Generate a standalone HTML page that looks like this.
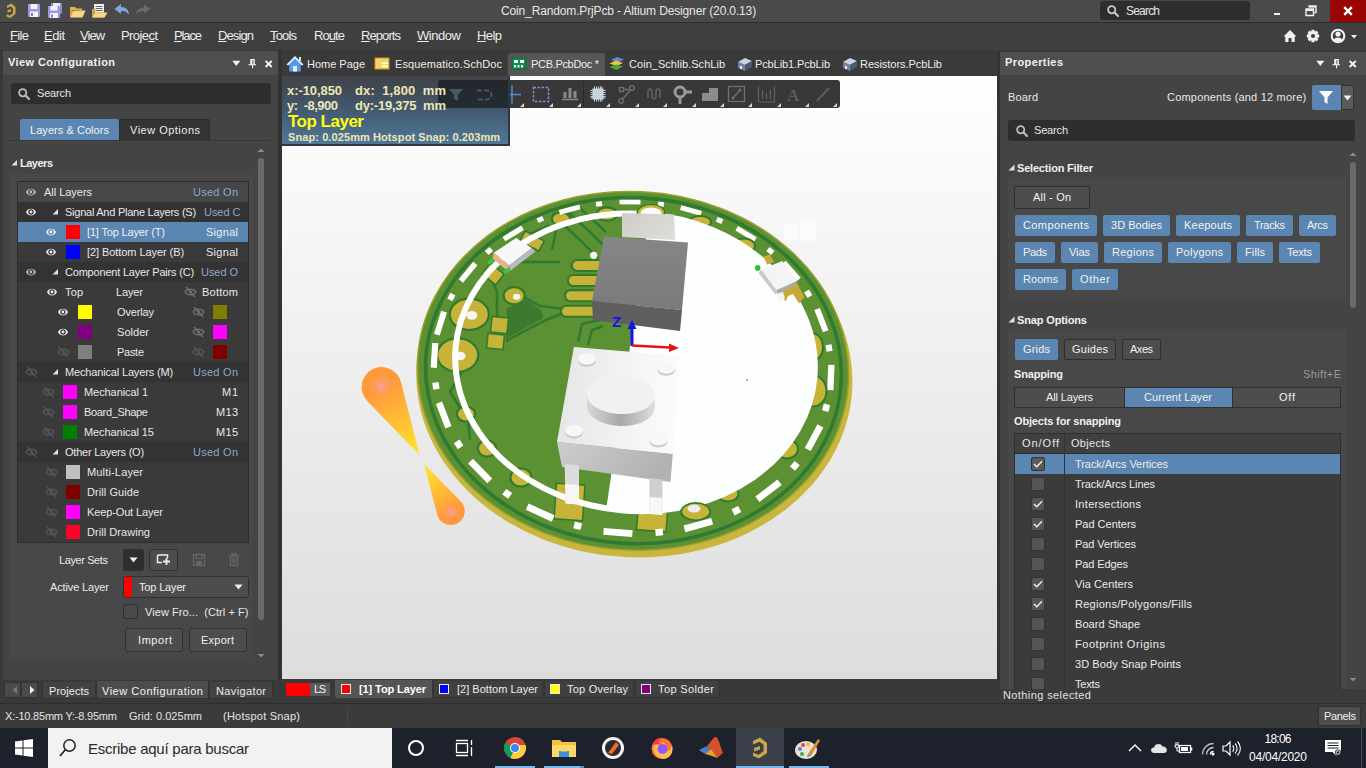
<!DOCTYPE html>
<html><head><meta charset="utf-8"><title>Altium Designer</title>
<style>
html,body{margin:0;padding:0;}
body{width:1366px;height:768px;overflow:hidden;position:relative;background:#3b3b3b;font-family:"Liberation Sans",sans-serif;}
u{text-decoration:underline;text-underline-offset:1px;}
</style></head><body>
<!-- p1_chrome -->
<div style="position:absolute;left:0px;top:0px;width:1366px;height:22px;background:#4a4a4a;"></div>
<div style="position:absolute;left:0px;top:22px;width:1366px;height:1px;background:#2e2e2e;"></div>
<div style="position:absolute;left:0px;top:23px;width:1366px;height:27px;background:#3f3f3f;"></div>
<svg style="position:absolute;left:0;top:0" width="160" height="22" viewBox="0 0 160 22">
<path d="M7 5.5 L11.5 3.5 L15.5 7 L15.5 14 L10 18 L6.5 16.5 L6.5 14.2 L9.8 15.6 L13 13.3 L13 8.2 L10.8 6.4 L7 8 Z" fill="#c9a646"/>
<path d="M7.5 10.2 L11 9 L11 11.5 L7.5 12.6 Z" fill="#c9a646"/>
<g>
<rect x="28" y="4" width="12" height="13" rx="1" fill="#9a9be0"/><rect x="30.5" y="4" width="7" height="5" fill="#f4f4ff"/><rect x="30" y="11.5" width="8" height="5.5" fill="#f4f4ff"/><rect x="31" y="13" width="2" height="3" fill="#7a7bc8"/>
</g>
<g>
<rect x="51" y="3" width="11" height="11" rx="1" fill="#8a8bd0"/><rect x="53" y="3" width="7" height="4" fill="#e8e8ff"/>
<rect x="48" y="6" width="12" height="12" rx="1" fill="#9a9be0"/><rect x="50.5" y="6" width="7" height="4.5" fill="#f4f4ff"/><rect x="50" y="13" width="8" height="5" fill="#f4f4ff"/><rect x="51" y="14.5" width="2" height="3" fill="#7a7bc8"/>
</g>
<g>
<path d="M70 7 L75 7 L76.5 8.5 L82 8.5 L82 10 L70 10 Z" fill="#e8b54a"/>
<path d="M70 17 L70 9.5 L73 9.5 L73 17 Z" fill="#d9a33a"/>
<path d="M70.5 17.5 L73.5 10.5 L85.5 10.5 L82.5 17.5 Z" fill="#f7d88a"/>
</g>
<g>
<rect x="94" y="4" width="10" height="9" fill="#f2f2f2"/><rect x="95.5" y="6" width="7" height="1" fill="#666"/><rect x="95.5" y="8" width="7" height="1" fill="#666"/><rect x="95.5" y="10" width="7" height="1" fill="#666"/>
<path d="M92 17.5 L92 9 L95 9 L95 12 L104 12 L104 17.5Z" fill="#d9a33a"/>
<path d="M92.5 17.5 L95.5 12.5 L107.5 12.5 L104.5 17.5 Z" fill="#f7d88a"/>
</g>
<path d="M114.5 9 L121 4 L121 7 C126 7 129 10 129 15 C127 11.5 124.5 11 121 11 L121 14 Z" fill="#7da7e0"/>
<path d="M150.500 9 L144 4.500 L144 7.500 C139.500 7.500 136.500 10 136 14.500 C138 11.500 140.500 11 144 11 L144 13.500 Z" fill="#6a6a6a"/>
</svg>
<div style="position:absolute;top:3.0px;height:16px;line-height:16px;font-size:12px;color:#e6e6e6;white-space:pre;letter-spacing:-0.14px;left:501.0px;">Coin_Random.PrjPcb - Altium Designer (20.0.13)</div>
<div style="position:absolute;left:1100px;top:1px;width:150px;height:19px;background:#2d2d2d;border-radius:3px;"></div>
<svg style="position:absolute;left:1106px;top:4px" width="14" height="14" viewBox="0 0 14 14"><circle cx="5.7" cy="5.7" r="3.6" fill="none" stroke="#c8c8c8" stroke-width="1.8"/><path d="M8.300 8.300 L12 12" stroke="#c8c8c8" stroke-width="2.2" stroke-linecap="round"/></svg>
<div style="position:absolute;top:2.5px;height:16px;line-height:16px;font-size:12px;color:#e6e6e6;white-space:pre;letter-spacing:-0.80px;left:1126.0px;">Search</div>
<div style="position:absolute;left:1274px;top:13px;width:6px;height:2px;background:#f0f0f0;"></div>
<svg style="position:absolute;left:1305px;top:5px" width="12" height="12" viewBox="0 0 12 12"><path d="M3.500 1 H11 V7.500 H9.500 M1 4 H8.500 V10.500 H1 Z" fill="none" stroke="#f0f0f0" stroke-width="1.4"/><rect x="1" y="4" width="7.5" height="2" fill="#f0f0f0"/><rect x="3.500" y="1" width="7.500" height="1.600" fill="#f0f0f0"/></svg>
<div style="position:absolute;left:1330px;top:0px;width:36px;height:22px;background:#990505;"></div>
<svg style="position:absolute;left:1342px;top:5px" width="12" height="12" viewBox="0 0 12 12"><path d="M2.200 2.200 L9.800 9.800 M9.800 2.200 L2.200 9.800" stroke="#fff" stroke-width="2.4"/></svg>
<div style="position:absolute;left:10px;top:27px;height:18px;line-height:18px;font-size:13px;color:#ececec;white-space:pre;letter-spacing:-0.65px"><u>F</u>ile</div>
<div style="position:absolute;left:44px;top:27px;height:18px;line-height:18px;font-size:13px;color:#ececec;white-space:pre;letter-spacing:-0.47px"><u>E</u>dit</div>
<div style="position:absolute;left:80px;top:27px;height:18px;line-height:18px;font-size:13px;color:#ececec;white-space:pre;letter-spacing:-0.98px"><u>V</u>iew</div>
<div style="position:absolute;left:121px;top:27px;height:18px;line-height:18px;font-size:13px;color:#ececec;white-space:pre;letter-spacing:-0.58px">Proje<u>c</u>t</div>
<div style="position:absolute;left:174px;top:27px;height:18px;line-height:18px;font-size:13px;color:#ececec;white-space:pre;letter-spacing:-1.13px"><u>P</u>lace</div>
<div style="position:absolute;left:218px;top:27px;height:18px;line-height:18px;font-size:13px;color:#ececec;white-space:pre;letter-spacing:-0.89px"><u>D</u>esign</div>
<div style="position:absolute;left:270px;top:27px;height:18px;line-height:18px;font-size:13px;color:#ececec;white-space:pre;letter-spacing:-0.84px"><u>T</u>ools</div>
<div style="position:absolute;left:314px;top:27px;height:18px;line-height:18px;font-size:13px;color:#ececec;white-space:pre;letter-spacing:-0.92px">Ro<u>u</u>te</div>
<div style="position:absolute;left:361px;top:27px;height:18px;line-height:18px;font-size:13px;color:#ececec;white-space:pre;letter-spacing:-0.92px"><u>R</u>eports</div>
<div style="position:absolute;left:417px;top:27px;height:18px;line-height:18px;font-size:13px;color:#ececec;white-space:pre;letter-spacing:-0.45px"><u>W</u>indow</div>
<div style="position:absolute;left:477px;top:27px;height:18px;line-height:18px;font-size:13px;color:#ececec;white-space:pre;letter-spacing:-0.58px"><u>H</u>elp</div>
<svg style="position:absolute;left:1280px;top:26px" width="86" height="20" viewBox="0 0 86 20">
<path d="M3.500 10.500 L10 4 L16.500 10.500 L14.700 10.500 L14.700 16 L11.500 16 L11.500 12 L8.500 12 L8.500 16 L5.300 16 L5.300 10.500 Z" fill="#f2f2f2"/>
<g transform="translate(33,10)" fill="#f2f2f2"><circle r="4.700"/><rect x="-1.600" y="-6.200" width="3.200" height="12.400"/><rect x="-1.600" y="-6.200" width="3.200" height="12.400" transform="rotate(45)"/><rect x="-1.600" y="-6.200" width="3.200" height="12.400" transform="rotate(90)"/><rect x="-1.600" y="-6.200" width="3.200" height="12.400" transform="rotate(135)"/><circle r="2.100" fill="#3f3f3f"/></g>
<circle cx="58" cy="10" r="6.300" fill="none" stroke="#f2f2f2" stroke-width="2"/><circle cx="58" cy="8" r="2.600" fill="#f2f2f2"/><path d="M53.800 14 C55 10.800 61 10.800 62.200 14 C60.500 16.200 55.500 16.200 53.800 14Z" fill="#f2f2f2"/>
<path d="M71 9 L77 9 L74 12.500 Z" fill="#f2f2f2"/>
</svg>
<!-- p2_left -->
<div style="position:absolute;left:0px;top:50px;width:282px;height:630px;background:#383838;"></div>
<div style="position:absolute;left:3px;top:51px;width:275px;height:24px;background:#4e4e4e;"></div>
<div style="position:absolute;left:3px;top:75px;width:275px;height:605px;background:#444444;"></div>
<div style="position:absolute;top:55.0px;height:15px;line-height:15px;font-size:11px;color:#f0f0f0;white-space:pre;letter-spacing:0.41px;font-weight:bold;left:8.0px;">View Configuration</div>
<svg style="position:absolute;left:230px;top:56px" width="46" height="14" viewBox="0 0 46 14"><path d="M2.300 4.800 L10.300 4.800 L6.300 10 Z" fill="#f4f4f4"/><path d="M20.200 3 H24.800 V8.200 H26 V9.300 H23.100 V12.200 H22 V9.300 H18.400 V8.200 H20.200 Z" fill="#f4f4f4"/><rect x="22.400" y="4" width="0.900" height="4.200" fill="#4e4e4e"/><path d="M35.600 4.900 L41.800 11 M41.800 4.900 L35.600 11" stroke="#f4f4f4" stroke-width="2"/></svg>
<div style="position:absolute;left:11px;top:83px;width:260px;height:21px;background:#2e2e2e;border-radius:3px;"></div>
<svg style="position:absolute;left:17px;top:87px" width="14" height="14" viewBox="0 0 14 14"><circle cx="5.700" cy="5.700" r="3.600" fill="none" stroke="#bdbdbd" stroke-width="1.800"/><path d="M8.300 8.300 L12 12" stroke="#bdbdbd" stroke-width="2.200" stroke-linecap="round"/></svg>
<div style="position:absolute;top:85.5px;height:15px;line-height:15px;font-size:11px;color:#e6e6e6;white-space:pre;letter-spacing:-0.17px;left:37.0px;">Search</div>
<div style="position:absolute;left:20px;top:119px;width:99px;height:21px;background:#5b86b2;border-radius:2px 2px 0 0;"></div>
<div style="position:absolute;left:119px;top:119px;width:91px;height:21px;background:#333333;border-radius:2px 2px 0 0;border:1px solid #2c2c2c;border-bottom:none;box-sizing:border-box;"></div>
<div style="position:absolute;left:8px;top:140px;width:263px;height:1px;background:#383838;"></div>
<div style="position:absolute;top:122.5px;height:15px;line-height:15px;font-size:11px;color:#f4f4f4;white-space:pre;letter-spacing:0.05px;left:30.0px;">Layers &amp; Colors</div>
<div style="position:absolute;top:122.5px;height:15px;line-height:15px;font-size:11px;color:#ececec;white-space:pre;letter-spacing:0.49px;left:130.0px;">View Options</div>
<svg style="position:absolute;left:11px;top:159px" width="7" height="7" viewBox="0 0 7 7"><path d="M6 1 L6 6.500 L0.500 6.500 Z" fill="#e0e0e0"/></svg>
<div style="position:absolute;top:155.5px;height:15px;line-height:15px;font-size:11px;color:#f0f0f0;white-space:pre;letter-spacing:-0.49px;font-weight:bold;left:20.0px;">Layers</div>
<div style="position:absolute;left:258px;top:158px;width:6px;height:462px;background:#6a6a6a;border-radius:3px;"></div>
<svg style="position:absolute;left:257px;top:147px" width="8" height="6"><path d="M0.500 5 L4 1.500 L7.500 5Z" fill="#8a8a8a"/></svg>
<svg style="position:absolute;left:257px;top:653px" width="8" height="6"><path d="M0.500 1 L4 4.500 L7.500 1Z" fill="#8a8a8a"/></svg>
<div style="position:absolute;left:10px;top:174px;width:243px;height:484px;background:#484848;"></div>
<div style="position:absolute;left:17px;top:181px;width:232px;height:362px;background:#373737;border:1px solid #2d2d2d;box-sizing:border-box;"></div>
<div style="position:absolute;left:18px;top:182px;width:230px;height:20px;background:#474747;"></div>
<svg style="position:absolute;left:25px;top:187px" width="12" height="10" viewBox="0 0 12 10"><path d="M1 5 C2.500 0.500 9.500 0.500 11 5 C9.500 9.500 2.500 9.500 1 5Z" fill="#bdbdbd"/><circle cx="6" cy="5" r="2.700" fill="#474747"/><circle cx="6" cy="5" r="1.400" fill="#bdbdbd"/></svg>
<div style="position:absolute;top:184.5px;height:15px;line-height:15px;font-size:11px;color:#e8e8e8;white-space:pre;letter-spacing:-0.03px;left:44.0px;">All Layers</div>
<div style="position:absolute;top:184.5px;height:15px;line-height:15px;font-size:11px;color:#8ba9cc;white-space:pre;letter-spacing:0.27px;left:193.0px;">Used On</div>
<div style="position:absolute;left:18px;top:202px;width:230px;height:20px;background:#333333;"></div>
<svg style="position:absolute;left:25px;top:207px" width="12" height="10" viewBox="0 0 12 10"><path d="M1 5 C2.500 0.500 9.500 0.500 11 5 C9.500 9.500 2.500 9.500 1 5Z" fill="#f0f0f0"/><circle cx="6" cy="5" r="2.700" fill="#333333"/><circle cx="6" cy="5" r="1.400" fill="#f0f0f0"/></svg>
<svg style="position:absolute;left:52px;top:208px" width="7" height="7" viewBox="0 0 7 7"><path d="M6 1 L6 6.500 L0.500 6.500 Z" fill="#e0e0e0"/></svg>
<div style="position:absolute;top:204.5px;height:15px;line-height:15px;font-size:11px;color:#e8e8e8;white-space:pre;letter-spacing:-0.25px;left:65.0px;">Signal And Plane Layers (S)</div>
<div style="position:absolute;left:204px;top:202px;width:35.5px;height:20px;overflow:hidden"><div style="position:absolute;top:2.5px;height:15px;line-height:15px;font-size:11px;color:#8ba9cc;white-space:pre;letter-spacing:-0.05px;left:0.0px;">Used C</div></div>
<div style="position:absolute;left:18px;top:222px;width:230px;height:20px;background:#5b86b2;"></div>
<svg style="position:absolute;left:45px;top:227px" width="12" height="10" viewBox="0 0 12 10"><path d="M1 5 C2.500 0.500 9.500 0.500 11 5 C9.500 9.500 2.500 9.500 1 5Z" fill="#f0f0f0"/><circle cx="6" cy="5" r="2.700" fill="#5b86b2"/><circle cx="6" cy="5" r="1.400" fill="#f0f0f0"/></svg>
<div style="position:absolute;left:66px;top:225.0px;width:14px;height:14px;background:#ff0000;"></div>
<div style="position:absolute;top:224.5px;height:15px;line-height:15px;font-size:11px;color:#f0f0f0;white-space:pre;letter-spacing:-0.16px;left:87.0px;">[1] Top Layer (T)</div>
<div style="position:absolute;top:224.5px;height:15px;line-height:15px;font-size:11px;color:#f0f0f0;white-space:pre;letter-spacing:0.28px;left:206.0px;">Signal</div>
<div style="position:absolute;left:18px;top:242px;width:230px;height:20px;background:#3a3a3a;"></div>
<svg style="position:absolute;left:45px;top:247px" width="12" height="10" viewBox="0 0 12 10"><path d="M1 5 C2.500 0.500 9.500 0.500 11 5 C9.500 9.500 2.500 9.500 1 5Z" fill="#f0f0f0"/><circle cx="6" cy="5" r="2.700" fill="#3a3a3a"/><circle cx="6" cy="5" r="1.400" fill="#f0f0f0"/></svg>
<div style="position:absolute;left:66px;top:245.0px;width:14px;height:14px;background:#0000ff;"></div>
<div style="position:absolute;top:244.5px;height:15px;line-height:15px;font-size:11px;color:#e8e8e8;white-space:pre;letter-spacing:-0.07px;left:87.0px;">[2] Bottom Layer (B)</div>
<div style="position:absolute;top:244.5px;height:15px;line-height:15px;font-size:11px;color:#e8e8e8;white-space:pre;letter-spacing:0.28px;left:206.0px;">Signal</div>
<div style="position:absolute;left:18px;top:262px;width:230px;height:20px;background:#333333;"></div>
<svg style="position:absolute;left:25px;top:267px" width="12" height="10" viewBox="0 0 12 10"><path d="M1 5 C2.500 0.500 9.500 0.500 11 5 C9.500 9.500 2.500 9.500 1 5Z" fill="#bdbdbd"/><circle cx="6" cy="5" r="2.700" fill="#333333"/><circle cx="6" cy="5" r="1.400" fill="#bdbdbd"/></svg>
<svg style="position:absolute;left:52px;top:268px" width="7" height="7" viewBox="0 0 7 7"><path d="M6 1 L6 6.500 L0.500 6.500 Z" fill="#e0e0e0"/></svg>
<div style="position:absolute;top:264.5px;height:15px;line-height:15px;font-size:11px;color:#e8e8e8;white-space:pre;letter-spacing:-0.20px;left:65.0px;">Component Layer Pairs (C)</div>
<div style="position:absolute;left:201px;top:262px;width:38.5px;height:20px;overflow:hidden"><div style="position:absolute;top:2.5px;height:15px;line-height:15px;font-size:11px;color:#8ba9cc;white-space:pre;letter-spacing:-0.05px;left:0.0px;">Used O</div></div>
<div style="position:absolute;left:18px;top:282px;width:230px;height:20px;background:#3a3a3a;"></div>
<svg style="position:absolute;left:46px;top:287px" width="12" height="10" viewBox="0 0 12 10"><path d="M1 5 C2.500 0.500 9.500 0.500 11 5 C9.500 9.500 2.500 9.500 1 5Z" fill="#f0f0f0"/><circle cx="6" cy="5" r="2.700" fill="#3a3a3a"/><circle cx="6" cy="5" r="1.400" fill="#f0f0f0"/></svg>
<div style="position:absolute;top:284.5px;height:15px;line-height:15px;font-size:11px;color:#e8e8e8;white-space:pre;letter-spacing:0.13px;left:65.0px;">Top</div>
<div style="position:absolute;top:284.5px;height:15px;line-height:15px;font-size:11px;color:#e8e8e8;white-space:pre;letter-spacing:-0.13px;left:116.0px;">Layer</div>
<svg style="position:absolute;left:183.5px;top:286px" width="13" height="12" viewBox="0 0 13 12"><path d="M1 6 C3 2.200 10 2.200 12 6 C10 9.800 3 9.800 1 6Z" fill="none" stroke="#707070" stroke-width="1.300"/><circle cx="6.500" cy="6" r="1.700" fill="#707070"/><path d="M2 1 L11 11" stroke="#707070" stroke-width="1.500"/></svg>
<div style="position:absolute;top:284.5px;height:15px;line-height:15px;font-size:11px;color:#e8e8e8;white-space:pre;letter-spacing:0.23px;left:202.0px;">Bottom</div>
<div style="position:absolute;left:18px;top:302px;width:230px;height:20px;background:#3a3a3a;"></div>
<svg style="position:absolute;left:57px;top:307px" width="12" height="10" viewBox="0 0 12 10"><path d="M1 5 C2.500 0.500 9.500 0.500 11 5 C9.500 9.500 2.500 9.500 1 5Z" fill="#f0f0f0"/><circle cx="6" cy="5" r="2.700" fill="#3a3a3a"/><circle cx="6" cy="5" r="1.400" fill="#f0f0f0"/></svg>
<div style="position:absolute;left:78px;top:305.0px;width:14px;height:14px;background:#ffff00;"></div>
<div style="position:absolute;top:304.5px;height:15px;line-height:15px;font-size:11px;color:#e8e8e8;white-space:pre;letter-spacing:-0.15px;left:117.0px;">Overlay</div>
<svg style="position:absolute;left:191.5px;top:306px" width="13" height="12" viewBox="0 0 13 12"><path d="M1 6 C3 2.200 10 2.200 12 6 C10 9.800 3 9.800 1 6Z" fill="none" stroke="#707070" stroke-width="1.300"/><circle cx="6.500" cy="6" r="1.700" fill="#707070"/><path d="M2 1 L11 11" stroke="#707070" stroke-width="1.500"/></svg>
<div style="position:absolute;left:213px;top:305.0px;width:14px;height:14px;background:#808000;"></div>
<div style="position:absolute;left:18px;top:322px;width:230px;height:20px;background:#3a3a3a;"></div>
<svg style="position:absolute;left:57px;top:327px" width="12" height="10" viewBox="0 0 12 10"><path d="M1 5 C2.500 0.500 9.500 0.500 11 5 C9.500 9.500 2.500 9.500 1 5Z" fill="#f0f0f0"/><circle cx="6" cy="5" r="2.700" fill="#3a3a3a"/><circle cx="6" cy="5" r="1.400" fill="#f0f0f0"/></svg>
<div style="position:absolute;left:78px;top:325.0px;width:14px;height:14px;background:#800080;"></div>
<div style="position:absolute;top:324.5px;height:15px;line-height:15px;font-size:11px;color:#e8e8e8;white-space:pre;letter-spacing:0.04px;left:117.0px;">Solder</div>
<svg style="position:absolute;left:191.5px;top:326px" width="13" height="12" viewBox="0 0 13 12"><path d="M1 6 C3 2.200 10 2.200 12 6 C10 9.800 3 9.800 1 6Z" fill="none" stroke="#707070" stroke-width="1.300"/><circle cx="6.500" cy="6" r="1.700" fill="#707070"/><path d="M2 1 L11 11" stroke="#707070" stroke-width="1.500"/></svg>
<div style="position:absolute;left:213px;top:325.0px;width:14px;height:14px;background:#ff00ff;"></div>
<div style="position:absolute;left:18px;top:342px;width:230px;height:20px;background:#3a3a3a;"></div>
<svg style="position:absolute;left:56.5px;top:346px" width="13" height="12" viewBox="0 0 13 12"><path d="M1 6 C3 2.200 10 2.200 12 6 C10 9.800 3 9.800 1 6Z" fill="none" stroke="#565656" stroke-width="1.300"/><circle cx="6.500" cy="6" r="1.700" fill="#565656"/><path d="M2 1 L11 11" stroke="#565656" stroke-width="1.500"/></svg>
<div style="position:absolute;left:78px;top:345.0px;width:14px;height:14px;background:#808080;"></div>
<div style="position:absolute;top:344.5px;height:15px;line-height:15px;font-size:11px;color:#e8e8e8;white-space:pre;letter-spacing:-0.28px;left:117.0px;">Paste</div>
<svg style="position:absolute;left:191.5px;top:346px" width="13" height="12" viewBox="0 0 13 12"><path d="M1 6 C3 2.200 10 2.200 12 6 C10 9.800 3 9.800 1 6Z" fill="none" stroke="#555" stroke-width="1.300"/><circle cx="6.500" cy="6" r="1.700" fill="#555"/><path d="M2 1 L11 11" stroke="#555" stroke-width="1.500"/></svg>
<div style="position:absolute;left:213px;top:345.0px;width:14px;height:14px;background:#800000;"></div>
<div style="position:absolute;left:18px;top:362px;width:230px;height:20px;background:#333333;"></div>
<svg style="position:absolute;left:24.5px;top:366px" width="13" height="12" viewBox="0 0 13 12"><path d="M1 6 C3 2.200 10 2.200 12 6 C10 9.800 3 9.800 1 6Z" fill="none" stroke="#565656" stroke-width="1.300"/><circle cx="6.500" cy="6" r="1.700" fill="#565656"/><path d="M2 1 L11 11" stroke="#565656" stroke-width="1.500"/></svg>
<svg style="position:absolute;left:52px;top:368px" width="7" height="7" viewBox="0 0 7 7"><path d="M6 1 L6 6.500 L0.500 6.500 Z" fill="#e0e0e0"/></svg>
<div style="position:absolute;top:364.5px;height:15px;line-height:15px;font-size:11px;color:#e8e8e8;white-space:pre;letter-spacing:-0.16px;left:65.0px;">Mechanical Layers (M)</div>
<div style="position:absolute;top:364.5px;height:15px;line-height:15px;font-size:11px;color:#8ba9cc;white-space:pre;letter-spacing:0.27px;left:193.0px;">Used On</div>
<div style="position:absolute;left:18px;top:382px;width:230px;height:20px;background:#3a3a3a;"></div>
<svg style="position:absolute;left:41.5px;top:386px" width="13" height="12" viewBox="0 0 13 12"><path d="M1 6 C3 2.200 10 2.200 12 6 C10 9.800 3 9.800 1 6Z" fill="none" stroke="#565656" stroke-width="1.300"/><circle cx="6.500" cy="6" r="1.700" fill="#565656"/><path d="M2 1 L11 11" stroke="#565656" stroke-width="1.500"/></svg>
<div style="position:absolute;left:63px;top:385.0px;width:14px;height:14px;background:#ff00ff;"></div>
<div style="position:absolute;top:384.5px;height:15px;line-height:15px;font-size:11px;color:#e8e8e8;white-space:pre;letter-spacing:-0.07px;left:84.0px;">Mechanical 1</div>
<div style="position:absolute;top:384.5px;height:15px;line-height:15px;font-size:11px;color:#e8e8e8;white-space:pre;letter-spacing:0.72px;left:222.0px;">M1</div>
<div style="position:absolute;left:18px;top:402px;width:230px;height:20px;background:#3a3a3a;"></div>
<svg style="position:absolute;left:41.5px;top:406px" width="13" height="12" viewBox="0 0 13 12"><path d="M1 6 C3 2.200 10 2.200 12 6 C10 9.800 3 9.800 1 6Z" fill="none" stroke="#565656" stroke-width="1.300"/><circle cx="6.500" cy="6" r="1.700" fill="#565656"/><path d="M2 1 L11 11" stroke="#565656" stroke-width="1.500"/></svg>
<div style="position:absolute;left:63px;top:405.0px;width:14px;height:14px;background:#ff00ff;"></div>
<div style="position:absolute;top:404.5px;height:15px;line-height:15px;font-size:11px;color:#e8e8e8;white-space:pre;letter-spacing:-0.33px;left:84.0px;">Board_Shape</div>
<div style="position:absolute;top:404.5px;height:15px;line-height:15px;font-size:11px;color:#e8e8e8;white-space:pre;letter-spacing:0.30px;left:216.0px;">M13</div>
<div style="position:absolute;left:18px;top:422px;width:230px;height:20px;background:#3a3a3a;"></div>
<svg style="position:absolute;left:41.5px;top:426px" width="13" height="12" viewBox="0 0 13 12"><path d="M1 6 C3 2.200 10 2.200 12 6 C10 9.800 3 9.800 1 6Z" fill="none" stroke="#565656" stroke-width="1.300"/><circle cx="6.500" cy="6" r="1.700" fill="#565656"/><path d="M2 1 L11 11" stroke="#565656" stroke-width="1.500"/></svg>
<div style="position:absolute;left:63px;top:425.0px;width:14px;height:14px;background:#008000;"></div>
<div style="position:absolute;top:424.5px;height:15px;line-height:15px;font-size:11px;color:#e8e8e8;white-space:pre;letter-spacing:-0.08px;left:84.0px;">Mechanical 15</div>
<div style="position:absolute;top:424.5px;height:15px;line-height:15px;font-size:11px;color:#e8e8e8;white-space:pre;letter-spacing:0.30px;left:216.0px;">M15</div>
<div style="position:absolute;left:18px;top:442px;width:230px;height:20px;background:#333333;"></div>
<svg style="position:absolute;left:24.5px;top:446px" width="13" height="12" viewBox="0 0 13 12"><path d="M1 6 C3 2.200 10 2.200 12 6 C10 9.800 3 9.800 1 6Z" fill="none" stroke="#565656" stroke-width="1.300"/><circle cx="6.500" cy="6" r="1.700" fill="#565656"/><path d="M2 1 L11 11" stroke="#565656" stroke-width="1.500"/></svg>
<svg style="position:absolute;left:52px;top:448px" width="7" height="7" viewBox="0 0 7 7"><path d="M6 1 L6 6.500 L0.500 6.500 Z" fill="#e0e0e0"/></svg>
<div style="position:absolute;top:444.5px;height:15px;line-height:15px;font-size:11px;color:#e8e8e8;white-space:pre;letter-spacing:-0.23px;left:65.0px;">Other Layers (O)</div>
<div style="position:absolute;top:444.5px;height:15px;line-height:15px;font-size:11px;color:#8ba9cc;white-space:pre;letter-spacing:0.27px;left:193.0px;">Used On</div>
<div style="position:absolute;left:18px;top:462px;width:230px;height:20px;background:#3a3a3a;"></div>
<svg style="position:absolute;left:44.5px;top:466px" width="13" height="12" viewBox="0 0 13 12"><path d="M1 6 C3 2.200 10 2.200 12 6 C10 9.800 3 9.800 1 6Z" fill="none" stroke="#565656" stroke-width="1.300"/><circle cx="6.500" cy="6" r="1.700" fill="#565656"/><path d="M2 1 L11 11" stroke="#565656" stroke-width="1.500"/></svg>
<div style="position:absolute;left:66px;top:465.0px;width:14px;height:14px;background:#c0c0c0;"></div>
<div style="position:absolute;top:464.5px;height:15px;line-height:15px;font-size:11px;color:#e8e8e8;white-space:pre;letter-spacing:0.16px;left:87.0px;">Multi-Layer</div>
<div style="position:absolute;left:18px;top:482px;width:230px;height:20px;background:#3a3a3a;"></div>
<svg style="position:absolute;left:44.5px;top:486px" width="13" height="12" viewBox="0 0 13 12"><path d="M1 6 C3 2.200 10 2.200 12 6 C10 9.800 3 9.800 1 6Z" fill="none" stroke="#565656" stroke-width="1.300"/><circle cx="6.500" cy="6" r="1.700" fill="#565656"/><path d="M2 1 L11 11" stroke="#565656" stroke-width="1.500"/></svg>
<div style="position:absolute;left:66px;top:485.0px;width:14px;height:14px;background:#800000;"></div>
<div style="position:absolute;top:484.5px;height:15px;line-height:15px;font-size:11px;color:#e8e8e8;white-space:pre;letter-spacing:0.07px;left:87.0px;">Drill Guide</div>
<div style="position:absolute;left:18px;top:502px;width:230px;height:20px;background:#3a3a3a;"></div>
<svg style="position:absolute;left:44.5px;top:506px" width="13" height="12" viewBox="0 0 13 12"><path d="M1 6 C3 2.200 10 2.200 12 6 C10 9.800 3 9.800 1 6Z" fill="none" stroke="#565656" stroke-width="1.300"/><circle cx="6.500" cy="6" r="1.700" fill="#565656"/><path d="M2 1 L11 11" stroke="#565656" stroke-width="1.500"/></svg>
<div style="position:absolute;left:66px;top:505.0px;width:14px;height:14px;background:#ff00ff;"></div>
<div style="position:absolute;top:504.5px;height:15px;line-height:15px;font-size:11px;color:#e8e8e8;white-space:pre;letter-spacing:-0.13px;left:87.0px;">Keep-Out Layer</div>
<div style="position:absolute;left:18px;top:522px;width:230px;height:20px;background:#3a3a3a;"></div>
<svg style="position:absolute;left:44.5px;top:526px" width="13" height="12" viewBox="0 0 13 12"><path d="M1 6 C3 2.200 10 2.200 12 6 C10 9.800 3 9.800 1 6Z" fill="none" stroke="#565656" stroke-width="1.300"/><circle cx="6.500" cy="6" r="1.700" fill="#565656"/><path d="M2 1 L11 11" stroke="#565656" stroke-width="1.500"/></svg>
<div style="position:absolute;left:66px;top:525.0px;width:14px;height:14px;background:#ff002a;"></div>
<div style="position:absolute;top:524.5px;height:15px;line-height:15px;font-size:11px;color:#e8e8e8;white-space:pre;letter-spacing:0.05px;left:87.0px;">Drill Drawing</div>
<div style="position:absolute;top:552.5px;height:15px;line-height:15px;font-size:11px;color:#e8e8e8;white-space:pre;letter-spacing:-0.40px;left:59.0px;">Layer Sets</div>
<div style="position:absolute;left:123px;top:549px;width:21px;height:22px;background:#2e2e2e;border-radius:3px;"></div>
<svg style="position:absolute;left:129px;top:557px" width="9" height="6"><path d="M0.500 0.500 L8.500 0.500 L4.500 5.500Z" fill="#f0f0f0"/></svg>
<div style="position:absolute;left:149px;top:549px;width:29px;height:22px;background:#4d4d4d;border:1px solid #303030;border-radius:3px;box-sizing:border-box;"></div>
<svg style="position:absolute;left:156px;top:553px" width="16" height="14" viewBox="0 0 16 14"><path d="M1.500 2 H11.500 V5 M6 9.500 H1.500 V2" fill="none" stroke="#f0f0f0" stroke-width="1.500"/><path d="M10.500 5 V12 M7 8.500 H14" stroke="#f0f0f0" stroke-width="1.800"/></svg>
<svg style="position:absolute;left:192px;top:553px" width="14" height="14" viewBox="0 0 14 14"><rect x="1.500" y="1.500" width="11" height="11" fill="none" stroke="#666" stroke-width="1.300"/><rect x="4" y="1.500" width="6" height="4" fill="none" stroke="#666" stroke-width="1.200"/><rect x="4" y="8" width="6" height="4.500" fill="#666"/></svg>
<svg style="position:absolute;left:227px;top:552px" width="14" height="15" viewBox="0 0 14 15"><path d="M2 4 H12 M5 4 V2 H9 V4 M3.500 4 V13.500 H10.500 V4 M6 6 V11.500 M8 6 V11.500" fill="none" stroke="#666" stroke-width="1.300"/></svg>
<div style="position:absolute;top:579.5px;height:15px;line-height:15px;font-size:11px;color:#e8e8e8;white-space:pre;letter-spacing:-0.14px;left:50.0px;">Active Layer</div>
<div style="position:absolute;left:123px;top:576px;width:126px;height:22px;background:#4d4d4d;border:1px solid #303030;border-radius:3px;box-sizing:border-box;"></div>
<div style="position:absolute;left:124px;top:577px;width:8px;height:20px;background:#ff0000;border-radius:2px 0 0 2px;"></div>
<div style="position:absolute;top:579.5px;height:15px;line-height:15px;font-size:11px;color:#f0f0f0;white-space:pre;letter-spacing:-0.16px;left:139.0px;">Top Layer</div>
<svg style="position:absolute;left:234px;top:584px" width="9" height="6"><path d="M0.500 0.500 L8.500 0.500 L4.500 5.500Z" fill="#f0f0f0"/></svg>
<div style="position:absolute;left:123px;top:604px;width:15px;height:15px;background:#4a4a4a;border:1px solid #2f2f2f;border-radius:3px;box-sizing:border-box;"></div>
<div style="position:absolute;top:604.5px;height:15px;line-height:15px;font-size:11px;color:#e8e8e8;white-space:pre;letter-spacing:0.06px;left:145.0px;">View Fro...  (Ctrl + F)</div>
<div style="position:absolute;left:125px;top:628px;width:58px;height:24px;background:#4d4d4d;border:1px solid #303030;border-radius:3px;box-sizing:border-box;"></div>
<div style="position:absolute;left:189px;top:628px;width:58px;height:24px;background:#4d4d4d;border:1px solid #303030;border-radius:3px;box-sizing:border-box;"></div>
<div style="position:absolute;top:632.5px;height:15px;line-height:15px;font-size:11px;color:#f0f0f0;white-space:pre;letter-spacing:0.57px;left:138.0px;">Import</div>
<div style="position:absolute;top:632.5px;height:15px;line-height:15px;font-size:11px;color:#f0f0f0;white-space:pre;letter-spacing:0.24px;left:201.0px;">Export</div>
<!-- p3_center -->
<div style="position:absolute;left:282px;top:50px;width:718px;height:26px;background:#3a3a3a;"></div>
<div style="position:absolute;left:278px;top:50px;width:4px;height:630px;background:#333;"></div>
<div style="position:absolute;left:997px;top:50px;width:3px;height:640px;background:#333;"></div>
<div style="position:absolute;left:508px;top:53px;width:97px;height:23px;background:#575757;border-radius:3px 3px 0 0;"></div>
<div style="position:absolute;top:56.5px;height:15px;line-height:15px;font-size:11px;color:#ececec;white-space:pre;letter-spacing:-0.01px;left:307.0px;">Home Page</div>
<div style="position:absolute;top:56.5px;height:15px;line-height:15px;font-size:11px;color:#ececec;white-space:pre;letter-spacing:0.11px;left:395.0px;">Esquematico.SchDoc</div>
<div style="position:absolute;top:56.5px;height:15px;line-height:15px;font-size:11px;color:#ececec;white-space:pre;letter-spacing:-0.32px;left:531.0px;">PCB.PcbDoc *</div>
<div style="position:absolute;top:56.5px;height:15px;line-height:15px;font-size:11px;color:#ececec;white-space:pre;letter-spacing:0.04px;left:629.0px;">Coin_Schlib.SchLib</div>
<div style="position:absolute;top:56.5px;height:15px;line-height:15px;font-size:11px;color:#ececec;white-space:pre;letter-spacing:-0.11px;left:755.0px;">PcbLib1.PcbLib</div>
<div style="position:absolute;top:56.5px;height:15px;line-height:15px;font-size:11px;color:#ececec;white-space:pre;letter-spacing:-0.04px;left:860.0px;">Resistors.PcbLib</div>
<svg style="position:absolute;left:286px;top:55px" width="680" height="18" viewBox="286 55 680 18">
<path d="M287 64.500 L295 56.500 L303 64.500 L300.800 64.500 L300.800 71.500 L289.200 71.500 L289.200 64.500Z" fill="#4f9bf0"/><path d="M286.500 64.500 L295 56 L303.500 64.500 L302 65.500 L295 58.500 L288 65.500Z" fill="#e8f0ff"/><rect x="293" y="66" width="4" height="5.500" fill="#e8f0ff"/><rect x="299" y="57" width="2" height="4" fill="#d8e4f8"/>
<rect x="375" y="58" width="14" height="11" fill="#f6d365" stroke="#c79a2a" stroke-width="1"/><rect x="382" y="62.500" width="6" height="1.600" fill="#fff"/><rect x="382" y="65.500" width="6" height="1.600" fill="#fff"/>
<rect x="512" y="58" width="14" height="11" fill="#128a4a" stroke="#0c6a38" stroke-width="1"/><rect x="514" y="60" width="4" height="3" fill="#e8fff0"/><rect x="520" y="60" width="4" height="3" fill="#e8fff0"/><rect x="514" y="65" width="2" height="2.500" fill="#e8fff0"/><rect x="517.500" y="65" width="2" height="2.500" fill="#e8fff0"/><rect x="521" y="65" width="2" height="2.500" fill="#e8fff0"/>
<path d="M611 60 L617 57 L624 59.500 L618 62.500Z" fill="#5a8ad8"/><path d="M609.500 63.500 L616 60.500 L623 63 L616.500 66Z" fill="#f0c23a"/><path d="M609.500 67 L616 64.500 L623 66.500 L616.500 70Z" fill="#4aa83a"/>
<path d="M738 62 L745 58 L752 61 L745 65Z" fill="#c8d4e4"/><path d="M738 62 L745 65 L745 71 L738 68Z" fill="#77859a"/><path d="M745 65 L752 61 L752 67 L745 71Z" fill="#4a5a72"/><rect x="740" y="66" width="2" height="3" fill="#e8eef8"/>
<path d="M843 62 L850 58 L857 61 L850 65Z" fill="#c8d4e4"/><path d="M843 62 L850 65 L850 71 L843 68Z" fill="#77859a"/><path d="M850 65 L857 61 L857 67 L850 71Z" fill="#4a5a72"/><rect x="845" y="66" width="2" height="3" fill="#e8eef8"/>
</svg>
<svg style="position:absolute;left:282px;top:76px" width="715" height="603" viewBox="282 76 715 603">
<defs>
<linearGradient id="bgg" x1="0" y1="0" x2="0" y2="1"><stop offset="0" stop-color="#ffffff"/><stop offset="0.25" stop-color="#f6f6f6"/><stop offset="1" stop-color="#dddddd"/></linearGradient>
<linearGradient id="cone1" gradientUnits="userSpaceOnUse" x1="419.500" y1="455" x2="381.600" y2="387"><stop offset="0" stop-color="#ffe92a"/><stop offset="0.45" stop-color="#ffc233"/><stop offset="1" stop-color="#ff9a3c"/></linearGradient>
<linearGradient id="cone2" gradientUnits="userSpaceOnUse" x1="424" y1="464" x2="450.700" y2="511"><stop offset="0" stop-color="#ffe92a"/><stop offset="0.5" stop-color="#ffc233"/><stop offset="1" stop-color="#ff9a3c"/></linearGradient>
<radialGradient id="pink"><stop offset="0" stop-color="#f9a0a8"/><stop offset="1" stop-color="#ff9a3c" stop-opacity="0"/></radialGradient>
<linearGradient id="gtop" x1="0" y1="0" x2="0" y2="1"><stop offset="0" stop-color="#868686"/><stop offset="1" stop-color="#7a7a7a"/></linearGradient>
<linearGradient id="tab" x1="0" y1="0" x2="1" y2="0.6"><stop offset="0" stop-color="#cfcdc8"/><stop offset="1" stop-color="#dcdbd8"/></linearGradient><linearGradient id="swt" x1="0" y1="0" x2="1" y2="0"><stop offset="0" stop-color="#e6e6e6"/><stop offset="0.7" stop-color="#f6f6f6"/><stop offset="1" stop-color="#fcfcfc"/></linearGradient>
<linearGradient id="swf" x1="0" y1="0" x2="1" y2="0.3"><stop offset="0" stop-color="#cdcdcd"/><stop offset="1" stop-color="#b2b2b2"/></linearGradient>
<linearGradient id="btn" x1="0" y1="0" x2="1" y2="0"><stop offset="0" stop-color="#d8d8d8"/><stop offset="0.5" stop-color="#a8a8a8"/><stop offset="1" stop-color="#dedede"/></linearGradient>
<clipPath id="inner"><ellipse cx="635" cy="362.300" rx="180" ry="148.600" transform="rotate(4.500 635 362.300)"/></clipPath>
<clipPath id="board"><ellipse cx="633" cy="370.800" rx="215.700" ry="179.300" transform="rotate(3 633 370.800)"/></clipPath>
</defs>
<rect x="282" y="76" width="715" height="603" fill="url(#bgg)"/>
<ellipse cx="634.3" cy="377.6" rx="218.2" ry="179.7" transform="rotate(3 634.3 377.6)" fill="#c9b63e"/>
<ellipse cx="633" cy="370.8" rx="215.7" ry="179.3" transform="rotate(3 633 370.8)" fill="#5b9133" stroke="#9a9e2c" stroke-width="1.5"/>
<ellipse cx="633.5" cy="370.6" rx="208" ry="173" transform="rotate(3 633.5 370.6)" fill="none" stroke="#2f7a30" stroke-width="3.6"/>
<g clip-path="url(#board)">
<path d="M507 308 L527 300 L542 311 L543 318 L506 339 Z" fill="#3d7a2e"/>
<path d="M492 280 L497 292 L497 330 M524 297 L540 306 L564 309 M506 341 L546 320 L564 313 M552 214 L578 238 L598 258 M566 210 L590 232 L604 246 M580 208 L606 232 M526 236 L548 226 L556 230 L552 250 M578 342 L582 324 L600 320 M588 345 L592 330 L603 326 M462 372 L450 392 L468 420 L470 440 M520 262 L560 262" fill="none" stroke="#2f7a30" stroke-width="2.5"/>
<ellipse cx="469.3" cy="314.3" rx="20.7" ry="16.8" fill="#2f7a30"/>
<ellipse cx="469.3" cy="314.3" rx="18.5" ry="14.6" fill="#c7b337"/>
<ellipse cx="471.8" cy="315.3" rx="5.5" ry="4.4" fill="#f6f6f6"/>
<ellipse cx="457.7" cy="355" rx="21.7" ry="17.8" fill="#2f7a30"/>
<ellipse cx="457.7" cy="355" rx="19.5" ry="15.6" fill="#c7b337"/>
<ellipse cx="460.2" cy="356" rx="5.3" ry="4.2" fill="#f6f6f6"/>
<ellipse cx="514.2" cy="295.7" rx="11.7" ry="9.7" fill="#2f7a30"/>
<ellipse cx="514.2" cy="295.7" rx="9.5" ry="7.5" fill="#c7b337"/>
<ellipse cx="516.7" cy="296.7" rx="3.8" ry="3.0" fill="#f6f6f6"/>
<ellipse cx="607" cy="214" rx="11.2" ry="7.7" fill="#2f7a30"/>
<ellipse cx="607" cy="214" rx="9" ry="5.5" fill="#c7b337"/>
<ellipse cx="561" cy="219" rx="10.2" ry="7.7" fill="#2f7a30"/>
<ellipse cx="561" cy="219" rx="8" ry="5.5" fill="#c7b337"/>
<ellipse cx="466" cy="414" rx="10.2" ry="8.7" fill="#2f7a30"/>
<ellipse cx="466" cy="414" rx="8" ry="6.5" fill="#c7b337"/>
<ellipse cx="487" cy="448.5" rx="10.2" ry="9.2" fill="#2f7a30"/>
<ellipse cx="487" cy="448.5" rx="8" ry="7" fill="#c7b337"/>
<ellipse cx="521" cy="477.5" rx="11.7" ry="10.2" fill="#2f7a30"/>
<ellipse cx="521" cy="477.5" rx="9.5" ry="8" fill="#c7b337"/>
<circle cx="593.700" cy="255.300" r="3.600" fill="#f8f8f8"/>
<rect x="570.8" y="258.9" width="40" height="13" rx="6.500" fill="#2f7a30"/>
<rect x="572.8" y="260.9" width="36" height="9" rx="4.500" fill="#c7b337"/>
<rect x="567" y="274.0" width="40" height="13" rx="6.500" fill="#2f7a30"/>
<rect x="569" y="276.0" width="36" height="9" rx="4.500" fill="#c7b337"/>
<rect x="564" y="289.2" width="40" height="13" rx="6.500" fill="#2f7a30"/>
<rect x="566" y="291.2" width="36" height="9" rx="4.500" fill="#c7b337"/>
<rect x="560" y="304.8" width="40" height="13" rx="6.500" fill="#2f7a30"/>
<rect x="562" y="306.8" width="36" height="9" rx="4.500" fill="#c7b337"/>
<rect x="490.5" y="316.5" width="18" height="17" fill="#2f7a30" transform="rotate(6 499.5 325.0)"/>
<rect x="492" y="318" width="15" height="14" fill="#c7b337" transform="rotate(6 499.5 325.0)"/>
<rect x="486.5" y="333.5" width="18" height="16" fill="#2f7a30" transform="rotate(6 495.5 341.5)"/>
<rect x="488" y="335" width="15" height="13" fill="#c7b337" transform="rotate(6 495.5 341.5)"/>
<rect x="483.5" y="266.5" width="19" height="15" fill="#2f7a30" transform="rotate(38 493.0 274.0)"/>
<rect x="485" y="268" width="16" height="12" fill="#c7b337" transform="rotate(38 493.0 274.0)"/>
<rect x="520.5" y="234.5" width="23" height="13" fill="#2f7a30" transform="rotate(28 532.0 241.0)"/>
<rect x="522" y="236" width="20" height="10" fill="#c7b337" transform="rotate(28 532.0 241.0)"/>
<rect x="554.5" y="483.5" width="30" height="37" fill="#2f7a30" transform="rotate(4 569.5 502.0)"/>
<rect x="556" y="485" width="27" height="34" fill="#c7b337" transform="rotate(4 569.5 502.0)"/>
<rect x="636.5" y="510.5" width="31" height="21" fill="#2f7a30" transform="rotate(4 652.0 521.0)"/>
<rect x="638" y="512" width="28" height="18" fill="#c7b337" transform="rotate(4 652.0 521.0)"/>
</g>
<path d="M619.5 202.0 L640.5 202.2" stroke="#ffffff" stroke-width="4.7" fill="none"/><path d="M658.0 203.9 L663.9 204.7" stroke="#ffffff" stroke-width="4.8" fill="none"/><path d="M680.7 207.7 L701.2 213.3" stroke="#ffffff" stroke-width="4.9" fill="none"/><path d="M716.7 219.2 L722.3 221.6" stroke="#ffffff" stroke-width="5.0" fill="none"/><path d="M736.7 228.2 L755.4 239.4" stroke="#ffffff" stroke-width="5.2" fill="none"/><path d="M768.0 249.0 L772.8 253.0" stroke="#ffffff" stroke-width="5.3" fill="none"/><path d="M783.7 262.5 L798.7 279.5" stroke="#ffffff" stroke-width="5.5" fill="none"/><path d="M806.5 291.0 L809.9 296.4" stroke="#ffffff" stroke-width="5.7" fill="none"/><path d="M817.1 309.0 L825.7 331.3" stroke="#ffffff" stroke-width="5.9" fill="none"/><path d="M828.5 344.7 L829.6 351.3" stroke="#ffffff" stroke-width="6.1" fill="none"/><path d="M831.4 364.9 L830.3 390.2" stroke="#ffffff" stroke-width="6.3" fill="none"/><path d="M827.0 404.4 L825.2 411.1" stroke="#ffffff" stroke-width="6.5" fill="none"/><path d="M820.4 425.9 L807.8 449.5" stroke="#ffffff" stroke-width="6.7" fill="none"/><path d="M797.2 463.1 L792.5 468.6" stroke="#ffffff" stroke-width="6.8" fill="none"/><path d="M779.6 482.2 L757.4 499.3" stroke="#ffffff" stroke-width="6.8" fill="none"/><path d="M739.7 509.0 L733.1 512.3" stroke="#ffffff" stroke-width="6.9" fill="none"/><path d="M712.2 521.3 L684.4 528.9" stroke="#ffffff" stroke-width="6.8" fill="none"/><path d="M662.9 531.9 L655.5 532.6" stroke="#ffffff" stroke-width="6.8" fill="none"/><path d="M632.4 533.7 L603.5 531.4" stroke="#ffffff" stroke-width="6.8" fill="none"/><path d="M581.3 526.8 L574.1 524.9" stroke="#ffffff" stroke-width="6.8" fill="none"/><path d="M553.2 518.5 L527.2 506.7" stroke="#ffffff" stroke-width="6.9" fill="none"/><path d="M510.2 495.9 L504.2 491.7" stroke="#ffffff" stroke-width="6.8" fill="none"/><path d="M489.8 480.8 L470.5 461.1" stroke="#ffffff" stroke-width="6.8" fill="none"/><path d="M460.6 447.3 L456.7 441.3" stroke="#ffffff" stroke-width="6.7" fill="none"/><path d="M448.4 427.3 L439.0 402.8" stroke="#ffffff" stroke-width="6.6" fill="none"/><path d="M436.4 389.3 L435.4 382.5" stroke="#ffffff" stroke-width="6.4" fill="none"/><path d="M433.7 367.8 L435.3 343.1" stroke="#ffffff" stroke-width="6.2" fill="none"/><path d="M436.9 334.6 L444.0 311.7" stroke="#ffffff" stroke-width="6.0" fill="none"/><path d="M449.9 299.9 L452.9 294.2" stroke="#ffffff" stroke-width="5.7" fill="none"/><path d="M460.9 281.0 L475.3 263.4" stroke="#ffffff" stroke-width="5.5" fill="none"/><path d="M486.6 253.0 L491.3 248.9" stroke="#ffffff" stroke-width="5.3" fill="none"/><path d="M503.9 239.1 L522.5 227.7" stroke="#ffffff" stroke-width="5.2" fill="none"/><path d="M537.5 220.7 L543.1 218.3" stroke="#ffffff" stroke-width="5.0" fill="none"/><path d="M559.4 212.3 L579.9 206.9" stroke="#ffffff" stroke-width="4.9" fill="none"/><path d="M596.0 204.3 L602.0 203.5" stroke="#ffffff" stroke-width="4.8" fill="none"/>
<g clip-path="url(#board)">
<ellipse cx="813" cy="347" rx="11" ry="14.5" fill="#2f7a30"/><ellipse cx="813" cy="347" rx="9" ry="12.5" fill="#c7b337"/>
<ellipse cx="813" cy="391" rx="14.5" ry="16.5" fill="#2f7a30"/><ellipse cx="813" cy="391" rx="12.5" ry="14.5" fill="#c7b337"/>
<ellipse cx="787" cy="449" rx="12" ry="10.5" fill="#2f7a30"/><ellipse cx="787" cy="449" rx="10" ry="8.5" fill="#c7b337"/>
<ellipse cx="728" cy="494" rx="11.5" ry="8.5" fill="#2f7a30"/><ellipse cx="728" cy="494" rx="9.5" ry="6.5" fill="#c7b337"/>
<ellipse cx="700" cy="222" rx="12" ry="7" fill="#2f7a30"/><ellipse cx="700" cy="222" rx="10" ry="5" fill="#c7b337"/>
<ellipse cx="744" cy="246" rx="12" ry="8.5" fill="#2f7a30"/><ellipse cx="744" cy="246" rx="10" ry="6.5" fill="#c7b337"/>
</g>
<ellipse cx="635" cy="362.3" rx="180" ry="148.6" transform="rotate(4.5 635 362.3)" fill="none" stroke="#ffffff" stroke-width="6"/>
<g clip-path="url(#inner)"><path d="M653 190 L631 340 L604.600 520 L700 560 L860 560 L860 190 Z" fill="#fdfefe"/></g>
<ellipse cx="695.700" cy="511.600" rx="15.500" ry="9.500" fill="#2f7a30"/><ellipse cx="695.700" cy="511.600" rx="13.500" ry="7.800" fill="#c7b337"/><ellipse cx="694" cy="508.500" rx="6.500" ry="4" fill="#ececf2"/>
<g clip-path="url(#inner)"><path d="M640 400 L640 503 L676 503 L700 498 L700 400 Z" fill="#fdfefe"/></g>
<path d="M493.700 252.700 L516.200 238 L531.800 247.900 L509.300 265.400 Z" fill="#f8f8f8"/><path d="M493.700 252.700 L509.300 265.400 L507.500 271 L492.500 258.500Z" fill="#e6b48c"/><path d="M509.300 265.400 L531.800 247.900 L535.500 251.500 L510 271Z" fill="#b9b9c2"/><path d="M487 262 L492 258 L494.500 261 L489.500 265Z M503 271 L508 267.500 L510 271 L505 274.500Z" fill="#3cc83c"/>
<path d="M781 290 L797 283 L804.500 297 L799 303.500 L793 294 L788 296 L786 301 L779 297Z" fill="#c9a83a"/><path d="M777 294 L783 292 L785 299 L779.500 301Z" fill="#f4f4f4"/><path d="M763.500 256.500 L770 254.500 L774 262 L767 264.500Z" fill="#c9a83a"/>
<path d="M761.100 269.600 L782.300 261.100 L796.700 281.400 L776.400 289.900 Z" fill="#f4f4f6"/><path d="M761.100 269.600 L776.400 289.900 L775.800 295 L758.800 273.300Z" fill="#c9c9c9"/><path d="M776.400 289.900 L796.700 281.400 L795.800 285.300 L776.800 294Z" fill="#a9a9a9"/><circle cx="757.700" cy="267.900" r="2.800" fill="#2fc02f"/>
<ellipse cx="651" cy="212.500" rx="14.500" ry="8.500" fill="#2f7a30"/><ellipse cx="651" cy="212.500" rx="13" ry="7.500" fill="#c7b337"/><ellipse cx="651" cy="213" rx="10.500" ry="5.500" fill="#fbfbfb"/>
<path d="M622 213 L674 214.500 L675 240 L622 237 Z" fill="url(#tab)"/>
<path d="M604 236.500 L688 242.500 L682 310 L592 301 Z" fill="url(#gtop)"/>
<path d="M592 301 L682 310 L680 331 L593 320 Z" fill="#5f5f5f"/>
<path d="M632 346 L632 327" stroke="#1414e6" stroke-width="3"/><path d="M627.500 329 L632 320 L636.500 329Z" fill="#1414e6"/>
<path d="M632 345.500 L670 347.500" stroke="#e61414" stroke-width="2.500"/><path d="M669 343.500 L679 348 L669 352Z" fill="#e61414"/>
<text x="612" y="327" font-family="Liberation Sans, sans-serif" font-weight="bold" font-size="15" fill="#1414e6">Z</text>
<path d="M557 442 L672.800 453.700 L670.500 482 L562 467 Z" fill="url(#swf)"/>
<path d="M573.900 347 L680.600 356 L672.800 453.700 L557 442 Z" fill="url(#swt)"/>
<path d="M564.700 464 L579 465.500 L579 504.500 L565.500 503.500Z" fill="#dcdcdc"/><path d="M565.300 484 L579 485 L579 504.500 L565.500 503.500Z" fill="#f7f7f7"/>
<path d="M649.400 478 L662.400 479.500 L662.400 515 L649.400 514Z" fill="#cfcfcf"/><path d="M649.400 497 L662.400 498 L662.400 515 L649.400 514Z" fill="#f7f7f7"/>
<path d="M586.700 394 A34 19 2 0 0 654.700 396 L654.700 408 A34 19 2 0 1 586.700 406 Z" fill="url(#btn)"/>
<ellipse cx="620.700" cy="394.500" rx="34" ry="19" transform="rotate(2 620.700 394.500)" fill="#f1f1f1"/>
<ellipse cx="586.9" cy="361" rx="9" ry="5.800" fill="#c8c8c8"/><ellipse cx="586.9" cy="359" rx="9" ry="5.800" fill="#f7f7f7"/>
<ellipse cx="666.3" cy="370" rx="9" ry="5.800" fill="#c8c8c8"/><ellipse cx="666.3" cy="368" rx="9" ry="5.800" fill="#f7f7f7"/>
<ellipse cx="573.9" cy="432.6" rx="9" ry="5.800" fill="#c8c8c8"/><ellipse cx="573.9" cy="430.6" rx="9" ry="5.800" fill="#f7f7f7"/>
<ellipse cx="658.5" cy="441.7" rx="9" ry="5.800" fill="#c8c8c8"/><ellipse cx="658.5" cy="439.7" rx="9" ry="5.800" fill="#f7f7f7"/>
<path d="M419.5 455 L367.2 400.9 A20 20 0 1 1 401.0 382.1 Z" fill="url(#cone1)"/><circle cx="381.600" cy="386" r="14" fill="url(#pink)"/>
<path d="M424 464 L460.7 501.2 A14 14 0 1 1 437.2 514.5 Z" fill="url(#cone2)"/><circle cx="451" cy="512" r="10" fill="url(#pink)"/>
<rect x="784" y="223" width="14" height="17" fill="#ffffff" opacity="0.600"/><rect x="800" y="221" width="16" height="20" fill="#ffffff" opacity="0.600"/>
<circle cx="747" cy="380" r="0.800" fill="#555"/>
</svg>
<div style="position:absolute;left:438px;top:80px;width:402px;height:28px;background:#383838;border-radius:3px;"></div>
<svg style="position:absolute;left:438px;top:80px" width="402" height="28" viewBox="438 80 402 28">
<g fill="#d8d8d8"><path d="M520 107 L524 107 L524 103Z"/><path d="M549 107 L553 107 L553 103Z"/><path d="M577 107 L581 107 L581 103Z"/><path d="M606 107 L610 107 L610 103Z"/><path d="M635 107 L639 107 L639 103Z"/><path d="M663 107 L667 107 L667 103Z"/><path d="M692 107 L696 107 L696 103Z"/><path d="M720 107 L724 107 L724 103Z"/><path d="M748 107 L752 107 L752 103Z"/><path d="M777 107 L781 107 L781 103Z"/><path d="M805 107 L809 107 L809 103Z"/><path d="M833 107 L837 107 L837 103Z"/></g>
<path d="M503 94.500 H521 M512 85.500 V103.500" stroke="#4a90d8" stroke-width="1.500"/>
<rect x="533.500" y="87.500" width="15" height="14" fill="none" stroke="#8a8ad8" stroke-width="1.500" stroke-dasharray="2.500 1.500"/>
<path d="M562 99.500 H578" stroke="#8a8a8a" stroke-width="1.500"/><rect x="563.500" y="92" width="3" height="6" fill="#8a8a8a"/><rect x="568.500" y="88" width="3" height="10" fill="#8a8a8a"/><rect x="573.500" y="91" width="3" height="7" fill="#8a8a8a"/>
<rect x="583" y="82" width="1" height="24" fill="#2a2a2a"/>
<rect x="592.500" y="88.500" width="11" height="11" fill="#c4d4dc"/><path d="M590.500 90.500 H605.500 M590.500 92.500 H605.500 M590.500 94.500 H605.500 M590.500 96.500 H605.500 M590.500 98 H605.500 M594.500 86.500 V101.500 M596.500 86.500 V101.500 M598.500 86.500 V101.500 M600.500 86.500 V101.500 M602 86.500 V101.500" stroke="#c4d4dc" stroke-width="1"/>
<g stroke="#707070" fill="none" stroke-width="1.300"><rect x="619.500" y="87.500" width="4" height="4"/><circle cx="632" cy="88" r="2.300"/><circle cx="621" cy="101" r="2.300"/><path d="M623.500 89.500 H629.500 M622.500 99 L630.500 90"/></g>
<path d="M648 98 V92 C648 88 652 88 652 92 V96 C652 100 656 100 656 96 V92 C656 88 660 88 660 92 V98" fill="none" stroke="#606060" stroke-width="1.600"/>
<circle cx="680" cy="92" r="5" fill="none" stroke="#9a9a9a" stroke-width="3"/><rect x="678.500" y="96" width="3" height="8" fill="#9a9a9a"/><rect x="684" y="90.500" width="8" height="3" fill="#9a9a9a"/>
<path d="M702 101 V93 H709 V88 H718 V101Z" fill="#8c8c8c"/>
<rect x="728.500" y="86.500" width="16" height="15" fill="none" stroke="#707070" stroke-width="1.300"/><path d="M733 98 L740 90" stroke="#707070" stroke-width="1.300"/><circle cx="733" cy="98" r="1.500" fill="#707070"/><circle cx="740" cy="90" r="1.500" fill="#707070"/>
<g stroke="#606060" stroke-width="1.200" fill="none"><path d="M758.500 86 V102 H774.500 V86 M762.500 90 V99 M766.500 93 V99 M770.500 90 V99"/></g>
<text x="787" y="101" font-family="Liberation Serif, serif" font-weight="bold" font-size="17" fill="#5c5c5c">A</text>
<path d="M817 101 L829 88" stroke="#5c5c5c" stroke-width="2"/>
</svg>
<div style="position:absolute;left:282px;top:76px;width:228px;height:70px;background:linear-gradient(180deg,#41464b 0%,#40474e 12%,#435970 50%,#4f7898 100%);border-right:2px solid #2b3742;border-bottom:2px solid #2b3742;box-sizing:border-box;"></div>
<div style="position:absolute;left:438px;top:80px;width:70px;height:28px;background:rgba(24,28,32,0.72);border-radius:3px 0 0 3px;"></div>
<svg style="position:absolute;left:438px;top:80px" width="71" height="28" viewBox="438 80 71 28"><path d="M449 89 H463 L458 95 V101 L454 99 V95Z" fill="#4a5660"/><path d="M477 90.500 H487 C493 90.500 493 99.500 487 99.500 H477" fill="none" stroke="#4a5660" stroke-width="2" stroke-dasharray="5 2"/></svg>
<div style="position:absolute;top:81.5px;height:17px;line-height:17px;font-size:13px;color:#efe6b4;white-space:pre;letter-spacing:-0.08px;font-weight:bold;left:287.0px;">x:-10,850</div>
<div style="position:absolute;top:81.5px;height:17px;line-height:17px;font-size:13px;color:#efe6b4;white-space:pre;letter-spacing:0.11px;font-weight:bold;left:355.0px;">dx:  1,800  mm</div>
<div style="position:absolute;top:96.5px;height:17px;line-height:17px;font-size:13px;color:#efe6b4;white-space:pre;letter-spacing:-0.52px;font-weight:bold;left:287.0px;">y:  -8,900</div>
<div style="position:absolute;top:96.5px;height:17px;line-height:17px;font-size:13px;color:#efe6b4;white-space:pre;letter-spacing:-0.23px;font-weight:bold;left:355.0px;">dy:-19,375  mm</div>
<div style="position:absolute;top:110.5px;height:21px;line-height:21px;font-size:17px;color:#ffff10;white-space:pre;letter-spacing:-0.50px;font-weight:bold;left:288.0px;">Top Layer</div>
<div style="position:absolute;top:130.0px;height:15px;line-height:15px;font-size:11px;color:#efe6b4;white-space:pre;letter-spacing:0.09px;font-weight:bold;left:288.0px;">Snap: 0.025mm Hotspot Snap: 0.203mm</div>
<!-- p4_right -->
<div style="position:absolute;left:1000px;top:50px;width:366px;height:640px;background:#444444;"></div>
<div style="position:absolute;left:1000px;top:52px;width:366px;height:23px;background:#4e4e4e;"></div>
<div style="position:absolute;left:1000px;top:50px;width:366px;height:2px;background:#383838;"></div>
<div style="position:absolute;top:55.0px;height:15px;line-height:15px;font-size:11px;color:#f0f0f0;white-space:pre;letter-spacing:0.40px;font-weight:bold;left:1005.0px;">Properties</div>
<svg style="position:absolute;left:1314px;top:56px" width="46" height="14" viewBox="0 0 46 14"><path d="M2.300 4.800 L10.300 4.800 L6.300 10 Z" fill="#f4f4f4"/><path d="M20.200 3 H24.800 V8.200 H26 V9.300 H23.100 V12.200 H22 V9.300 H18.400 V8.200 H20.200 Z" fill="#f4f4f4"/><rect x="22.400" y="4" width="0.900" height="4.200" fill="#4e4e4e"/><path d="M35.600 4.900 L41.800 11 M41.800 4.900 L35.600 11" stroke="#f4f4f4" stroke-width="2"/></svg>
<div style="position:absolute;top:89.5px;height:15px;line-height:15px;font-size:11px;color:#e8e8e8;white-space:pre;letter-spacing:0.16px;left:1008.0px;">Board</div>
<div style="position:absolute;top:89.5px;height:15px;line-height:15px;font-size:11px;color:#e8e8e8;white-space:pre;letter-spacing:0.20px;left:1167.0px;">Components (and 12 more)</div>
<div style="position:absolute;left:1312px;top:85px;width:29px;height:25px;background:#5b86b2;border-radius:2px 0 0 2px;"></div>
<svg style="position:absolute;left:1318px;top:90px" width="16" height="15" viewBox="0 0 16 15"><path d="M1 1 H15 L9.500 7.500 V14 L6.500 12 V7.500Z" fill="#ffffff"/></svg>
<div style="position:absolute;left:1341px;top:85px;width:13px;height:25px;background:#5a5a5a;border-radius:0 2px 2px 0;border:1px solid #333;box-sizing:border-box;"></div>
<svg style="position:absolute;left:1343px;top:95px" width="9" height="6"><path d="M0.500 0.500 L8.500 0.500 L4.500 5.500Z" fill="#f0f0f0"/></svg>
<div style="position:absolute;left:1008px;top:120px;width:347px;height:21px;background:#2e2e2e;border-radius:3px;"></div>
<svg style="position:absolute;left:1015px;top:124px" width="14" height="14" viewBox="0 0 14 14"><circle cx="5.700" cy="5.700" r="3.600" fill="none" stroke="#bdbdbd" stroke-width="1.800"/><path d="M8.300 8.300 L12 12" stroke="#bdbdbd" stroke-width="2.200" stroke-linecap="round"/></svg>
<div style="position:absolute;top:122.5px;height:15px;line-height:15px;font-size:11px;color:#e6e6e6;white-space:pre;letter-spacing:-0.17px;left:1034.0px;">Search</div>
<div style="position:absolute;left:1350px;top:162px;width:6px;height:146px;background:#6a6a6a;border-radius:3px;"></div>
<svg style="position:absolute;left:1349px;top:151px" width="8" height="6"><path d="M0.500 5 L4 1.500 L7.500 5Z" fill="#8a8a8a"/></svg>
<svg style="position:absolute;left:1349px;top:677px" width="8" height="6"><path d="M0.500 1 L4 4.500 L7.500 1Z" fill="#8a8a8a"/></svg>
<svg style="position:absolute;left:1008px;top:164px" width="7" height="7" viewBox="0 0 7 7"><path d="M6.500 0.500 L6.500 6.500 L0.500 6.500 Z" fill="#e0e0e0"/></svg>
<div style="position:absolute;top:160.5px;height:15px;line-height:15px;font-size:11px;color:#f0f0f0;white-space:pre;letter-spacing:-0.19px;font-weight:bold;left:1017.0px;">Selection Filter</div>
<div style="position:absolute;left:1008px;top:178px;width:338px;height:121px;background:#484848;"></div>
<div style="position:absolute;left:1014px;top:186px;width:76px;height:23px;background:#4d4d4d;border-radius:2px;border:1px solid #2f2f2f;box-sizing:border-box;"></div><div style="position:absolute;top:189.5px;height:15px;line-height:15px;font-size:11px;color:#f2f2f2;white-space:pre;letter-spacing:0.19px;left:1033.0px;">All - On</div>
<div style="position:absolute;left:1015px;top:215px;width:82px;height:21px;background:#5b86b2;border-radius:2px;"></div><div style="position:absolute;top:217.5px;height:15px;line-height:15px;font-size:11px;color:#f2f2f2;white-space:pre;letter-spacing:0.40px;left:1023.0px;">Components</div>
<div style="position:absolute;left:1103px;top:215px;width:67px;height:21px;background:#5b86b2;border-radius:2px;"></div><div style="position:absolute;top:217.5px;height:15px;line-height:15px;font-size:11px;color:#f2f2f2;white-space:pre;letter-spacing:0.03px;left:1111.0px;">3D Bodies</div>
<div style="position:absolute;left:1176px;top:215px;width:64px;height:21px;background:#5b86b2;border-radius:2px;"></div><div style="position:absolute;top:217.5px;height:15px;line-height:15px;font-size:11px;color:#f2f2f2;white-space:pre;letter-spacing:0.22px;left:1184.0px;">Keepouts</div>
<div style="position:absolute;left:1246px;top:215px;width:47px;height:21px;background:#5b86b2;border-radius:2px;"></div><div style="position:absolute;top:217.5px;height:15px;line-height:15px;font-size:11px;color:#f2f2f2;white-space:pre;letter-spacing:-0.32px;left:1254.0px;">Tracks</div>
<div style="position:absolute;left:1299px;top:215px;width:37px;height:21px;background:#5b86b2;border-radius:2px;"></div><div style="position:absolute;top:217.5px;height:15px;line-height:15px;font-size:11px;color:#f2f2f2;white-space:pre;letter-spacing:-0.33px;left:1307.0px;">Arcs</div>
<div style="position:absolute;left:1015px;top:242px;width:40px;height:21px;background:#5b86b2;border-radius:2px;"></div><div style="position:absolute;top:244.5px;height:15px;line-height:15px;font-size:11px;color:#f2f2f2;white-space:pre;letter-spacing:-0.36px;left:1023.0px;">Pads</div>
<div style="position:absolute;left:1061px;top:242px;width:37px;height:21px;background:#5b86b2;border-radius:2px;"></div><div style="position:absolute;top:244.5px;height:15px;line-height:15px;font-size:11px;color:#f2f2f2;white-space:pre;letter-spacing:-0.07px;left:1069.0px;">Vias</div>
<div style="position:absolute;left:1104px;top:242px;width:58px;height:21px;background:#5b86b2;border-radius:2px;"></div><div style="position:absolute;top:244.5px;height:15px;line-height:15px;font-size:11px;color:#f2f2f2;white-space:pre;letter-spacing:0.27px;left:1112.0px;">Regions</div>
<div style="position:absolute;left:1168px;top:242px;width:63px;height:21px;background:#5b86b2;border-radius:2px;"></div><div style="position:absolute;top:244.5px;height:15px;line-height:15px;font-size:11px;color:#f2f2f2;white-space:pre;letter-spacing:0.25px;left:1176.0px;">Polygons</div>
<div style="position:absolute;left:1237px;top:242px;width:36px;height:21px;background:#5b86b2;border-radius:2px;"></div><div style="position:absolute;top:244.5px;height:15px;line-height:15px;font-size:11px;color:#f2f2f2;white-space:pre;letter-spacing:0.11px;left:1245.0px;">Fills</div>
<div style="position:absolute;left:1279px;top:242px;width:41px;height:21px;background:#5b86b2;border-radius:2px;"></div><div style="position:absolute;top:244.5px;height:15px;line-height:15px;font-size:11px;color:#f2f2f2;white-space:pre;letter-spacing:-0.17px;left:1287.0px;">Texts</div>
<div style="position:absolute;left:1015px;top:269px;width:51px;height:21px;background:#5b86b2;border-radius:2px;"></div><div style="position:absolute;top:271.5px;height:15px;line-height:15px;font-size:11px;color:#f2f2f2;white-space:pre;letter-spacing:0.04px;left:1023.0px;">Rooms</div>
<div style="position:absolute;left:1072px;top:269px;width:46px;height:21px;background:#5b86b2;border-radius:2px;"></div><div style="position:absolute;top:271.5px;height:15px;line-height:15px;font-size:11px;color:#f2f2f2;white-space:pre;letter-spacing:0.62px;left:1080.0px;">Other</div>
<svg style="position:absolute;left:1008px;top:316px" width="7" height="7" viewBox="0 0 7 7"><path d="M6.500 0.500 L6.500 6.500 L0.500 6.500 Z" fill="#e0e0e0"/></svg>
<div style="position:absolute;top:312.5px;height:15px;line-height:15px;font-size:11px;color:#f0f0f0;white-space:pre;letter-spacing:-0.14px;font-weight:bold;left:1017.0px;">Snap Options</div>
<div style="position:absolute;left:1008px;top:330px;width:338px;height:360px;background:#484848;"></div>
<div style="position:absolute;left:1015px;top:339px;width:43px;height:21px;background:#5b86b2;border-radius:2px;"></div><div style="position:absolute;top:341.5px;height:15px;line-height:15px;font-size:11px;color:#f2f2f2;white-space:pre;letter-spacing:0.18px;left:1023.0px;">Grids</div>
<div style="position:absolute;left:1064px;top:339px;width:52px;height:21px;background:#4d4d4d;border-radius:2px;border:1px solid #2f2f2f;box-sizing:border-box;"></div><div style="position:absolute;top:341.5px;height:15px;line-height:15px;font-size:11px;color:#f2f2f2;white-space:pre;letter-spacing:0.23px;left:1072.0px;">Guides</div>
<div style="position:absolute;left:1122px;top:339px;width:39px;height:21px;background:#4d4d4d;border-radius:2px;border:1px solid #2f2f2f;box-sizing:border-box;"></div><div style="position:absolute;top:341.5px;height:15px;line-height:15px;font-size:11px;color:#f2f2f2;white-space:pre;letter-spacing:-0.48px;left:1130.0px;">Axes</div>
<div style="position:absolute;top:366.5px;height:15px;line-height:15px;font-size:11px;color:#f0f0f0;white-space:pre;letter-spacing:-0.16px;font-weight:bold;left:1014.0px;">Snapping</div>
<div style="position:absolute;top:366.5px;height:15px;line-height:15px;font-size:11px;color:#9a9a9a;white-space:pre;letter-spacing:0.37px;left:1303.0px;">Shift+E</div>
<div style="position:absolute;left:1014px;top:387px;width:327px;height:21px;background:#4d4d4d;border:1px solid #2f2f2f;box-sizing:border-box;"></div>
<div style="position:absolute;left:1124px;top:387px;width:109px;height:21px;background:#5b86b2;border:1px solid #2f2f2f;box-sizing:border-box;"></div>
<div style="position:absolute;top:390.0px;height:15px;line-height:15px;font-size:11px;color:#f0f0f0;white-space:pre;letter-spacing:-0.14px;left:1046.0px;">All Layers</div>
<div style="position:absolute;top:390.0px;height:15px;line-height:15px;font-size:11px;color:#f0f0f0;white-space:pre;letter-spacing:0.06px;left:1144.0px;">Current Layer</div>
<div style="position:absolute;top:390.0px;height:15px;line-height:15px;font-size:11px;color:#f0f0f0;white-space:pre;letter-spacing:0.77px;left:1279.0px;">Off</div>
<div style="position:absolute;top:413.5px;height:15px;line-height:15px;font-size:11px;color:#f0f0f0;white-space:pre;letter-spacing:-0.16px;font-weight:bold;left:1014.0px;">Objects for snapping</div>
<div style="position:absolute;left:1014px;top:433px;width:327px;height:257px;background:#3b3b3b;border:1px solid #2f2f2f;box-sizing:border-box;"></div>
<div style="position:absolute;left:1015px;top:434px;width:325px;height:19px;background:#404040;"></div>
<div style="position:absolute;left:1015px;top:453px;width:325px;height:1px;background:#2f2f2f;"></div>
<div style="position:absolute;top:436.0px;height:15px;line-height:15px;font-size:11px;color:#e8e8e8;white-space:pre;letter-spacing:0.96px;left:1022.0px;">On/Off</div>
<div style="position:absolute;top:436.0px;height:15px;line-height:15px;font-size:11px;color:#e8e8e8;white-space:pre;letter-spacing:0.29px;left:1071.0px;">Objects</div>
<div style="position:absolute;left:1015px;top:454px;width:325px;height:20px;background:#5b86b2;"></div>
<div style="position:absolute;left:1031px;top:457px;width:14px;height:14px;background:#5a5a5a;border:1px solid #333;border-radius:2px;box-sizing:border-box;"></div>
<svg style="position:absolute;left:1033px;top:460px" width="10" height="8" viewBox="0 0 10 8"><path d="M1 4 L3.800 6.800 L9 1.200" fill="none" stroke="#f0f0f0" stroke-width="1.400"/></svg>
<div style="position:absolute;top:456.5px;height:15px;line-height:15px;font-size:11px;color:#ececec;white-space:pre;letter-spacing:-0.07px;left:1075.0px;">Track/Arcs Vertices</div>
<div style="position:absolute;left:1031px;top:477px;width:14px;height:14px;background:#555555;border:1px solid #333;border-radius:2px;box-sizing:border-box;"></div>
<div style="position:absolute;top:476.5px;height:15px;line-height:15px;font-size:11px;color:#ececec;white-space:pre;letter-spacing:-0.10px;left:1075.0px;">Track/Arcs Lines</div>
<div style="position:absolute;left:1031px;top:497px;width:14px;height:14px;background:#555555;border:1px solid #333;border-radius:2px;box-sizing:border-box;"></div>
<svg style="position:absolute;left:1033px;top:500px" width="10" height="8" viewBox="0 0 10 8"><path d="M1 4 L3.800 6.800 L9 1.200" fill="none" stroke="#f0f0f0" stroke-width="1.400"/></svg>
<div style="position:absolute;top:496.5px;height:15px;line-height:15px;font-size:11px;color:#ececec;white-space:pre;letter-spacing:0.30px;left:1075.0px;">Intersections</div>
<div style="position:absolute;left:1031px;top:517px;width:14px;height:14px;background:#555555;border:1px solid #333;border-radius:2px;box-sizing:border-box;"></div>
<svg style="position:absolute;left:1033px;top:520px" width="10" height="8" viewBox="0 0 10 8"><path d="M1 4 L3.800 6.800 L9 1.200" fill="none" stroke="#f0f0f0" stroke-width="1.400"/></svg>
<div style="position:absolute;top:516.5px;height:15px;line-height:15px;font-size:11px;color:#ececec;white-space:pre;letter-spacing:-0.01px;left:1075.0px;">Pad Centers</div>
<div style="position:absolute;left:1031px;top:537px;width:14px;height:14px;background:#555555;border:1px solid #333;border-radius:2px;box-sizing:border-box;"></div>
<div style="position:absolute;top:536.5px;height:15px;line-height:15px;font-size:11px;color:#ececec;white-space:pre;letter-spacing:-0.07px;left:1075.0px;">Pad Vertices</div>
<div style="position:absolute;left:1031px;top:557px;width:14px;height:14px;background:#555555;border:1px solid #333;border-radius:2px;box-sizing:border-box;"></div>
<div style="position:absolute;top:556.5px;height:15px;line-height:15px;font-size:11px;color:#ececec;white-space:pre;letter-spacing:-0.10px;left:1075.0px;">Pad Edges</div>
<div style="position:absolute;left:1031px;top:577px;width:14px;height:14px;background:#555555;border:1px solid #333;border-radius:2px;box-sizing:border-box;"></div>
<svg style="position:absolute;left:1033px;top:580px" width="10" height="8" viewBox="0 0 10 8"><path d="M1 4 L3.800 6.800 L9 1.200" fill="none" stroke="#f0f0f0" stroke-width="1.400"/></svg>
<div style="position:absolute;top:576.5px;height:15px;line-height:15px;font-size:11px;color:#ececec;white-space:pre;letter-spacing:0.07px;left:1075.0px;">Via Centers</div>
<div style="position:absolute;left:1031px;top:597px;width:14px;height:14px;background:#555555;border:1px solid #333;border-radius:2px;box-sizing:border-box;"></div>
<svg style="position:absolute;left:1033px;top:600px" width="10" height="8" viewBox="0 0 10 8"><path d="M1 4 L3.800 6.800 L9 1.200" fill="none" stroke="#f0f0f0" stroke-width="1.400"/></svg>
<div style="position:absolute;top:596.5px;height:15px;line-height:15px;font-size:11px;color:#ececec;white-space:pre;letter-spacing:0.27px;left:1075.0px;">Regions/Polygons/Fills</div>
<div style="position:absolute;left:1031px;top:617px;width:14px;height:14px;background:#555555;border:1px solid #333;border-radius:2px;box-sizing:border-box;"></div>
<div style="position:absolute;top:616.5px;height:15px;line-height:15px;font-size:11px;color:#ececec;white-space:pre;letter-spacing:0.08px;left:1075.0px;">Board Shape</div>
<div style="position:absolute;left:1031px;top:637px;width:14px;height:14px;background:#555555;border:1px solid #333;border-radius:2px;box-sizing:border-box;"></div>
<div style="position:absolute;top:636.5px;height:15px;line-height:15px;font-size:11px;color:#ececec;white-space:pre;letter-spacing:0.54px;left:1075.0px;">Footprint Origins</div>
<div style="position:absolute;left:1031px;top:657px;width:14px;height:14px;background:#555555;border:1px solid #333;border-radius:2px;box-sizing:border-box;"></div>
<div style="position:absolute;top:656.5px;height:15px;line-height:15px;font-size:11px;color:#ececec;white-space:pre;letter-spacing:0.08px;left:1075.0px;">3D Body Snap Points</div>
<div style="position:absolute;left:1031px;top:677px;width:14px;height:13px;background:#555555;border:1px solid #333;border-radius:2px;box-sizing:border-box;"></div>
<div style="position:absolute;top:676.5px;height:15px;line-height:15px;font-size:11px;color:#ececec;white-space:pre;letter-spacing:-0.17px;left:1075.0px;">Texts</div>
<div style="position:absolute;left:1064px;top:434px;width:1px;height:256px;background:#333;"></div>
<div style="position:absolute;left:1000px;top:689px;width:366px;height:15px;background:#3b3b3b;"></div>
<div style="position:absolute;top:688.0px;height:15px;line-height:15px;font-size:11px;color:#e0e0e0;white-space:pre;letter-spacing:0.40px;left:1003.0px;">Nothing selected</div>
<!-- p5_bottom -->
<div style="position:absolute;left:0px;top:680px;width:1000px;height:24px;background:#393939;"></div>
<div style="position:absolute;left:4px;top:682px;width:17px;height:16px;background:#4a4a4a;border:1px solid #333;box-sizing:border-box;"></div>
<div style="position:absolute;left:21px;top:682px;width:17px;height:16px;background:#4a4a4a;border:1px solid #333;box-sizing:border-box;"></div>
<svg style="position:absolute;left:4px;top:682px" width="34" height="16"><path d="M13 4 L13 12 L8.500 8Z" fill="#777"/><path d="M26 4 L26 12 L30.500 8Z" fill="#f0f0f0"/></svg>
<div style="position:absolute;left:42px;top:682px;width:54px;height:17px;background:#424242;border:1px solid #333;border-top:none;box-sizing:border-box;"></div>
<div style="position:absolute;left:96px;top:681px;width:113px;height:18px;background:#4c4c4c;border:1px solid #333;border-top:none;box-sizing:border-box;"></div>
<div style="position:absolute;left:209px;top:682px;width:64px;height:17px;background:#424242;border:1px solid #333;border-top:none;box-sizing:border-box;"></div>
<div style="position:absolute;top:683.5px;height:15px;line-height:15px;font-size:11px;color:#ececec;white-space:pre;letter-spacing:0.04px;left:49.0px;">Projects</div>
<div style="position:absolute;top:683.5px;height:15px;line-height:15px;font-size:11px;color:#f2f2f2;white-space:pre;letter-spacing:0.52px;left:102.0px;">View Configuration</div>
<div style="position:absolute;top:683.5px;height:15px;line-height:15px;font-size:11px;color:#ececec;white-space:pre;letter-spacing:0.37px;left:216.0px;">Navigator</div>
<div style="position:absolute;left:286px;top:683px;width:24px;height:13px;background:#ff0000;"></div>
<div style="position:absolute;left:310px;top:683px;width:20px;height:13px;background:#5a5a5a;"></div>
<div style="position:absolute;top:682.0px;height:15px;line-height:15px;font-size:11px;color:#f2f2f2;white-space:pre;letter-spacing:-1.45px;left:314.0px;">LS</div>
<div style="position:absolute;left:433px;top:681px;width:110px;height:17px;background:#404040;border:1px solid #333;border-top:none;box-sizing:border-box;"></div>
<div style="position:absolute;left:544px;top:681px;width:90px;height:17px;background:#404040;border:1px solid #333;border-top:none;box-sizing:border-box;"></div>
<div style="position:absolute;left:635px;top:681px;width:85px;height:17px;background:#404040;border:1px solid #333;border-top:none;box-sizing:border-box;"></div>
<div style="position:absolute;left:335px;top:680px;width:97px;height:18px;background:#555555;border-radius:0 0 2px 2px;"></div>
<div style="position:absolute;left:341px;top:684px;width:10px;height:10px;background:#ff0000;border:1px solid #e8e8e8;box-sizing:border-box;"></div>
<div style="position:absolute;top:681.5px;height:15px;line-height:15px;font-size:11px;color:#ffffff;white-space:pre;letter-spacing:-0.10px;font-weight:bold;left:359.0px;">[1] Top Layer</div>
<div style="position:absolute;left:439px;top:684px;width:10px;height:10px;background:#0000ff;border:1px solid #e8e8e8;box-sizing:border-box;"></div>
<div style="position:absolute;top:681.5px;height:15px;line-height:15px;font-size:11px;color:#ececec;white-space:pre;letter-spacing:0.02px;left:457.0px;">[2] Bottom Layer</div>
<div style="position:absolute;left:550px;top:684px;width:10px;height:10px;background:#ffff00;border:1px solid #e8e8e8;box-sizing:border-box;"></div>
<div style="position:absolute;top:681.5px;height:15px;line-height:15px;font-size:11px;color:#ececec;white-space:pre;letter-spacing:0.23px;left:567.0px;">Top Overlay</div>
<div style="position:absolute;left:641px;top:684px;width:10px;height:10px;background:#800080;border:1px solid #e8e8e8;box-sizing:border-box;"></div>
<div style="position:absolute;top:681.5px;height:15px;line-height:15px;font-size:11px;color:#ececec;white-space:pre;letter-spacing:0.38px;left:658.0px;">Top Solder</div>
<div style="position:absolute;left:0px;top:704px;width:1366px;height:24px;background:#3b3b3b;"></div>
<div style="position:absolute;left:0px;top:703px;width:1366px;height:1px;background:#2e2e2e;"></div>
<div style="position:absolute;top:708.5px;height:15px;line-height:15px;font-size:11px;color:#e4e4e4;white-space:pre;letter-spacing:-0.21px;left:5.0px;">X:-10.85mm Y:-8.95mm</div>
<div style="position:absolute;top:708.5px;height:15px;line-height:15px;font-size:11px;color:#e4e4e4;white-space:pre;letter-spacing:0.02px;left:129.0px;">Grid: 0.025mm</div>
<div style="position:absolute;top:708.5px;height:15px;line-height:15px;font-size:11px;color:#e4e4e4;white-space:pre;letter-spacing:0.23px;left:223.0px;">(Hotspot Snap)</div>
<div style="position:absolute;left:347px;top:706px;width:1px;height:20px;background:#4a4a4a;"></div>
<div style="position:absolute;left:1318px;top:706px;width:43px;height:20px;background:#4d4d4d;border:1px solid #2f2f2f;border-radius:2px;box-sizing:border-box;"></div>
<div style="position:absolute;top:708.5px;height:15px;line-height:15px;font-size:11px;color:#f0f0f0;white-space:pre;letter-spacing:-0.33px;left:1324.0px;">Panels</div>
<div style="position:absolute;left:0px;top:728px;width:1366px;height:40px;background:#1d212c;"></div>
<svg style="position:absolute;left:15px;top:739px" width="18" height="18" viewBox="0 0 18 18"><path d="M0 2.500 L7.500 1.500 V8.500 H0Z M8.500 1.300 L18 0 V8.500 H8.500Z M0 9.500 H7.500 V16.500 L0 15.500Z M8.500 9.500 H18 V18 L8.500 16.700Z" fill="#ffffff"/></svg>
<div style="position:absolute;left:48px;top:728px;width:344px;height:40px;background:#f2f2f2;"></div>
<svg style="position:absolute;left:58px;top:738px" width="20" height="20" viewBox="0 0 20 20"><circle cx="11.500" cy="7.500" r="5.700" fill="none" stroke="#222" stroke-width="1.500"/><path d="M7.500 11.500 L2 18" stroke="#222" stroke-width="1.700"/></svg>
<div style="position:absolute;top:738.5px;height:19px;line-height:19px;font-size:15px;color:#2a2a2a;white-space:pre;letter-spacing:-0.25px;left:88.0px;">Escribe aquí para buscar</div>
<svg style="position:absolute;left:406px;top:738px" width="20" height="20"><circle cx="10" cy="10" r="7" fill="none" stroke="#fff" stroke-width="2"/></svg>
<svg style="position:absolute;left:453px;top:738px" width="22" height="20" viewBox="0 0 22 20"><rect x="3.500" y="5.500" width="11" height="9" fill="none" stroke="#fff" stroke-width="1.300"/><path d="M3 2.500 H15 M3 17.500 H15 M18.500 2 V7 M18.500 9 V18" stroke="#fff" stroke-width="1.300"/></svg>
<div style="position:absolute;left:736px;top:728px;width:48px;height:40px;background:#3b3f49;"></div>
<div style="position:absolute;left:495px;top:766px;width:40px;height:2px;background:#76b9ed;"></div>
<div style="position:absolute;left:544px;top:766px;width:40px;height:2px;background:#76b9ed;"></div>
<div style="position:absolute;left:736px;top:766px;width:48px;height:2px;background:#76b9ed;"></div>
<div style="position:absolute;left:789px;top:766px;width:40px;height:2px;background:#76b9ed;"></div>
<div style="position:absolute;left:580px;top:766px;width:4px;height:2px;background:#5a8ab8;"></div>
<svg style="position:absolute;left:503px;top:736px" width="24" height="24" viewBox="0 0 24 24"><circle cx="12" cy="12" r="11" fill="#db4437"/><path d="M12 12 L2.500 6.500 A11 11 0 0 0 7.500 22 Z" fill="#0f9d58"/><path d="M12 12 L7.500 22 A11 11 0 0 0 22.500 9 L12 9Z" fill="#ffcd40"/><circle cx="12" cy="12" r="5" fill="#fff"/><circle cx="12" cy="12" r="4" fill="#4285f4"/></svg>
<svg style="position:absolute;left:551px;top:737px" width="26" height="22" viewBox="0 0 26 22"><path d="M1 3 H9 L11 5 H25 V20 H1Z" fill="#f4c03e"/><rect x="1" y="8" width="24" height="12" fill="#fbd867"/><rect x="8" y="14" width="10" height="6" fill="#3c8fdc"/><rect x="10" y="12.500" width="6" height="2" fill="#fbd867"/></svg>
<svg style="position:absolute;left:601px;top:736px" width="24" height="24" viewBox="0 0 24 24"><circle cx="12" cy="12" r="11" fill="#f4f4f4"/><circle cx="12" cy="12" r="8" fill="#2a2a2a"/><path d="M7 17 L15 6 L18 9 L11 18Z" fill="#f26a2a"/></svg>
<svg style="position:absolute;left:650px;top:736px" width="24" height="24" viewBox="0 0 24 24"><circle cx="12" cy="12.500" r="10.500" fill="#ff7139"/><path d="M4 6 C2 14 5 22 13 23 C20 23 24 16 22 9 C21 14 18 16 15 15 C18 12 16 7 12 6 C13 9 10 10 8 9 C6 8 5 7 4 6Z" fill="#ffbd4f"/><circle cx="12.500" cy="13" r="5" fill="#9059ff"/><path d="M3 9 C4 4 8 1 13 2 C9 3 8 6 9 8Z" fill="#ff3647"/></svg>
<svg style="position:absolute;left:698px;top:736px" width="26" height="24" viewBox="0 0 26 24"><path d="M1 14 L9 10 L13 13 L7 18Z" fill="#4a7fc0"/><path d="M9 10 C13 6 15 1 18 1 C20 1 22 9 25 17 L19 22 C17 18 15 15 13 13Z" fill="#d8502a"/><path d="M13 13 C15 15 17 18 19 22 C15 20 11 19 7 18Z" fill="#f0a030"/></svg>
<svg style="position:absolute;left:748px;top:736px" width="24" height="24" viewBox="0 0 24 24"><path d="M5 5 L12 1.500 L19 7 L19 17 L11 22.500 L5 20 L5 16.500 L10.500 18.800 L15.500 15.300 L15.500 8.800 L11.500 5.700 L5 8.500 Z" fill="#c9a646"/><path d="M6 12 L12 10 L12 13.500 L6 15.500 Z" fill="#c9a646"/></svg>
<svg style="position:absolute;left:794px;top:736px" width="28" height="24" viewBox="0 0 28 24"><ellipse cx="12" cy="14" rx="11" ry="9" fill="#e8e2da"/><circle cx="6" cy="13" r="2" fill="#3c8fdc"/><circle cx="9" cy="9" r="2" fill="#e84a3a"/><circle cx="14" cy="8.500" r="2" fill="#f0c030"/><circle cx="8" cy="18" r="2" fill="#4aa83a"/><path d="M14 18 L24 3 L26 4.500 L17 20Z" fill="#d8902a"/><path d="M13 21 L14 18 L17 20Z" fill="#3c8fdc"/></svg>
<svg style="position:absolute;left:1125px;top:738px" width="120" height="20" viewBox="1125 738 120 20">
<path d="M1129 751 L1135 745 L1141 751" fill="none" stroke="#fff" stroke-width="1.400"/>
<path d="M1154.500 753 C1150 753 1150 747.500 1154 747.500 C1155 743 1161.500 743 1162.500 746.500 C1167.500 746 1168.500 753 1164 753Z" fill="#e4e4e4"/>
<rect x="1179.500" y="745.500" width="11" height="7" fill="none" stroke="#fff" stroke-width="1.200"/><rect x="1181" y="747" width="7" height="4" fill="#fff"/><rect x="1191" y="747.500" width="1.300" height="3" fill="#fff"/><path d="M1176 742 V745 M1178 742 V745 M1175 745 H1179 V747 Q1177 749 1175 747Z M1177 748 V751 H1179.500" stroke="#fff" stroke-width="1" fill="none"/>
<g fill="none" stroke="#fff" stroke-width="1.300"><path d="M1210.500 754.500 A3 3 0 0 1 1213.500 751.500"/><path d="M1206.500 754.500 A7 7 0 0 1 1213.500 747.500" opacity="0.8"/><path d="M1202.500 754.500 A11 11 0 0 1 1213.500 743.500" opacity="0.7"/></g><circle cx="1213" cy="754" r="1.500" fill="#fff"/>
<path d="M1223 746 H1226 L1230 742 V755 L1226 751 H1223Z" fill="none" stroke="#fff" stroke-width="1.200"/><path d="M1232.500 745.500 A4 4 0 0 1 1232.500 751.500 M1235 743.500 A7 7 0 0 1 1235 753.500 M1237.500 741.500 A10 10 0 0 1 1237.500 755.500" fill="none" stroke="#fff" stroke-width="1.100"/>
</svg>
<div style="position:absolute;top:730.5px;height:16px;line-height:16px;font-size:12px;color:#ffffff;white-space:pre;letter-spacing:-0.76px;left:1264.5px;">18:06</div>
<div style="position:absolute;top:748.5px;height:16px;line-height:16px;font-size:12px;color:#ffffff;white-space:pre;letter-spacing:-0.23px;left:1249.0px;">04/04/2020</div>
<svg style="position:absolute;left:1324px;top:739px" width="18" height="18" viewBox="0 0 18 18"><path d="M1 1 H17 V13 H12.500 V17 L8.500 13 H1Z" fill="#fff"/><path d="M3.500 4 H14.500 M3.500 6.500 H14.500 M3.500 9 H14.500" stroke="#1d212c" stroke-width="1.200"/><circle cx="14" cy="13.500" r="3" fill="#1d212c"/><circle cx="14" cy="13.500" r="1.800" fill="none" stroke="#fff" stroke-width="0.900"/></svg>
<div style="position:absolute;left:1361px;top:728px;width:1px;height:40px;background:#4a4e58;"></div>
</body></html>
